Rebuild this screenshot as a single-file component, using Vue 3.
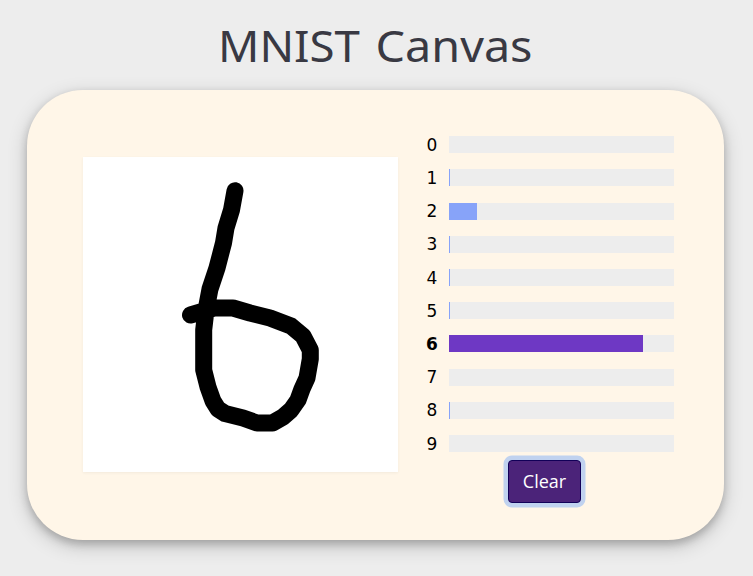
<script setup>
const digits = [0, 0.45, 12.4, 0.45, 0.45, 0.45, 86.2, 0, 0.45, 0]
const best = digits.indexOf(Math.max(...digits))
</script>

<template>
  <main class="page">
    <h1 class="title">
      <svg width="340" height="71" role="img">
        <text x="12" y="42.5" textLength="142" lengthAdjust="spacingAndGlyphs">MNIST</text>
        <text x="169.5" y="42.5" textLength="157" lengthAdjust="spacingAndGlyphs">Canvas</text>
      </svg>
    </h1>
    <section class="card">
      <svg class="canvas" viewBox="83 157 315 315">
        <polyline
          points="235,190.7 231.5,210 226,228 223.5,243 217,268 210,289 206,310 203.7,330 203.7,370 208,387 213,401 218,409 225,413.5 243,418 257,423 272.5,423 283,417 291,410 298,400 302,389 307,378 310.3,359 310.3,350 303,336 291,326 270,318 250,313 233,308 214,308 190.5,315"
        />
      </svg>
      <div class="side">
        <ul class="results">
          <li v-for="(value, i) in digits" :key="i" class="row" :class="{ best: i === best }">
            <span class="label">{{ i }}</span>
            <div class="track"><div class="fill" :style="{ width: value + '%' }"></div></div>
          </li>
        </ul>
        <button class="clear" type="button">Clear</button>
      </div>
    </section>
  </main>
</template>

<style>
body {
  background: #ededed;
  overflow: hidden;
}
</style>

<style scoped>
.page {
  height: 576px;
  box-sizing: border-box;
  padding: 19px 29px 0 27px;
  font-family: Verdana, "DejaVu Sans", sans-serif;
}
.title {
  margin: 0;
  height: 71px;
  display: flex;
  justify-content: center;
  font-weight: 400;
}
.title svg {
  overflow: visible;
  fill: #393943;
  font-family: Verdana, "Noto Sans", sans-serif;
  font-size: 43.5px;
}
.card {
  height: 450px;
  box-sizing: border-box;
  padding: 46px 50px 0 56px;
  display: flex;
  align-items: flex-start;
  border-radius: 56px;
  background: #fff6e8;
  box-shadow: 0 4px 8px rgba(0, 0, 0, 0.2), 0 6px 20px rgba(0, 0, 0, 0.19);
}
.canvas {
  width: 315px;
  height: 315px;
  margin-top: 21px;
  background: #fff;
  box-shadow: 0 1px 3px rgba(0, 0, 0, 0.05);
}
.canvas polyline {
  fill: none;
  stroke: #000;
  stroke-width: 17;
  stroke-linecap: round;
  stroke-linejoin: round;
}
.side {
  width: 248px;
  margin-left: 28px;
  display: flex;
  flex-direction: column;
}
.results {
  margin: 0;
  padding: 0.15px 0 0;
  list-style: none;
  display: flex;
  flex-direction: column;
  gap: 16.22px;
}
.row {
  height: 17px;
  display: flex;
  align-items: center;
}
.label {
  width: 12px;
  margin-right: 11px;
  display: flex;
  justify-content: center;
  font-size: 17px;
  line-height: 18px;
  color: #000;
}
.track {
  width: 225px;
  height: 17px;
  background: #ededed;
}
.fill {
  height: 100%;
  background: #87a3f9;
}
.best .label {
  font-weight: 700;
}
.best .fill {
  background: #6e38c4;
}
.clear {
  width: 73px;
  height: 43px;
  margin: 7.8px 0 0 82px;
  padding: 0;
  border: 1px solid #120058;
  border-radius: 4px;
  background: #4b2379;
  box-shadow: 0 0 0 4.5px #c0d2ef;
  color: #fff;
  font: 18px/40px "Segoe UI", "Open Sans", sans-serif;
}
</style>
